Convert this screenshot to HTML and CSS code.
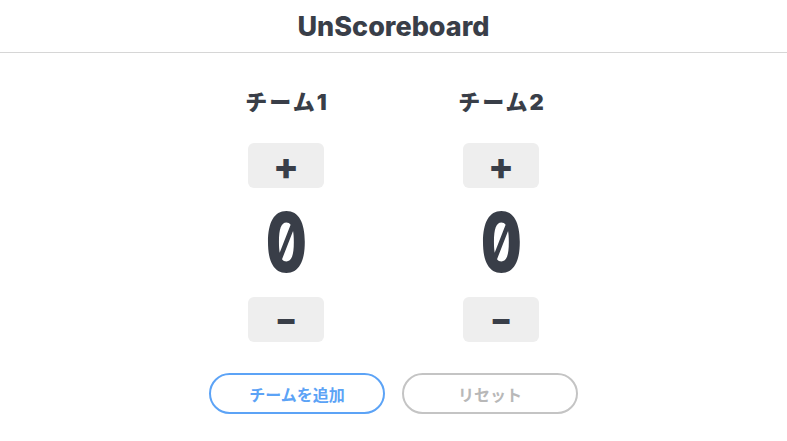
FILE: index.html
```html
<!DOCTYPE html>
<html lang="ja">
<head>
    <meta charset="UTF-8">
    <meta name="viewport" content="width=device-width, initial-scale=1.0">
    <title>UnScoreboard</title>
    <link rel="stylesheet" href="styles.css">
</head>
<body>
    <header class="app-header">
        <h1>UnScoreboard</h1>
    </header>

    <main class="board">
        <div class="teams">
            <div class="team">
                <h2 class="team-name">チーム1</h2>
                <button class="score-btn">+</button>
                <div class="score"><span class="digits">0</span></div>
                <button class="score-btn score-btn-minus">−</button>
            </div>
            <div class="team">
                <h2 class="team-name">チーム2</h2>
                <button class="score-btn">+</button>
                <div class="score"><span class="digits">0</span></div>
                <button class="score-btn score-btn-minus">−</button>
            </div>
        </div>

        <div class="actions">
            <button class="pill pill-add">チームを追加</button>
            <button class="pill pill-reset">リセット</button>
        </div>
    </main>
</body>
</html>
```

FILE: styles.css
```css
body {
    margin: 0;
    font-family: Inter, "Noto Sans CJK JP", sans-serif;
    color: #393e48;
    background: #fff;
}
.app-header {
    border-bottom: 1px solid #d6d6d6;
    height: 52px;
    display: flex;
    align-items: center;
    justify-content: center;
}
.app-header h1 {
    margin: 0;
    font-size: 27px;
    font-weight: 800;
}
.board {
    display: flex;
    flex-direction: column;
    align-items: center;
    padding-top: 36px;
}
.teams {
    display: flex;
    gap: 139px;
}
.team {
    width: 76px;
    display: flex;
    flex-direction: column;
    align-items: center;
}
.team-name {
    margin: 0 -2px 0 0;
    font-size: 22px;
    font-weight: 900;
    letter-spacing: 2px;
    white-space: nowrap;
    line-height: 26px;
}
.score-btn {
    width: 76px;
    height: 45px;
    border: none;
    border-radius: 6px;
    background: #eeeeee;
    color: #393e48;
    font-family: Inter, sans-serif;
    font-size: 38px;
    font-weight: 800;
    line-height: 1;
    cursor: pointer;
    padding: 0;
}
.score-btn-minus {
    font-size: 32px;
    font-weight: 900;
}
.team-name + .score-btn {
    margin-top: 28px;
}
.score {
    font-family: Inter, sans-serif;
    font-feature-settings: "zero", "tnum";
    font-weight: 800;
    font-size: 82px;
    line-height: 109px;
}
.digits {
    display: inline-block;
    transform: scaleX(0.78);
}
.actions {
    display: flex;
    gap: 17px;
    margin-top: 31px;
}
.pill {
    width: 176px;
    height: 41px;
    border-radius: 21px;
    background: #fff;
    font-family: Inter, "Noto Sans CJK JP", sans-serif;
    font-size: 16px;
    font-weight: 700;
    cursor: pointer;
}
.pill-add {
    border: 2px solid #5ca3f6;
    color: #5ca3f6;
}
.pill-reset {
    border: 2px solid #c4c4c4;
    color: #b8b8b8;
}
```
